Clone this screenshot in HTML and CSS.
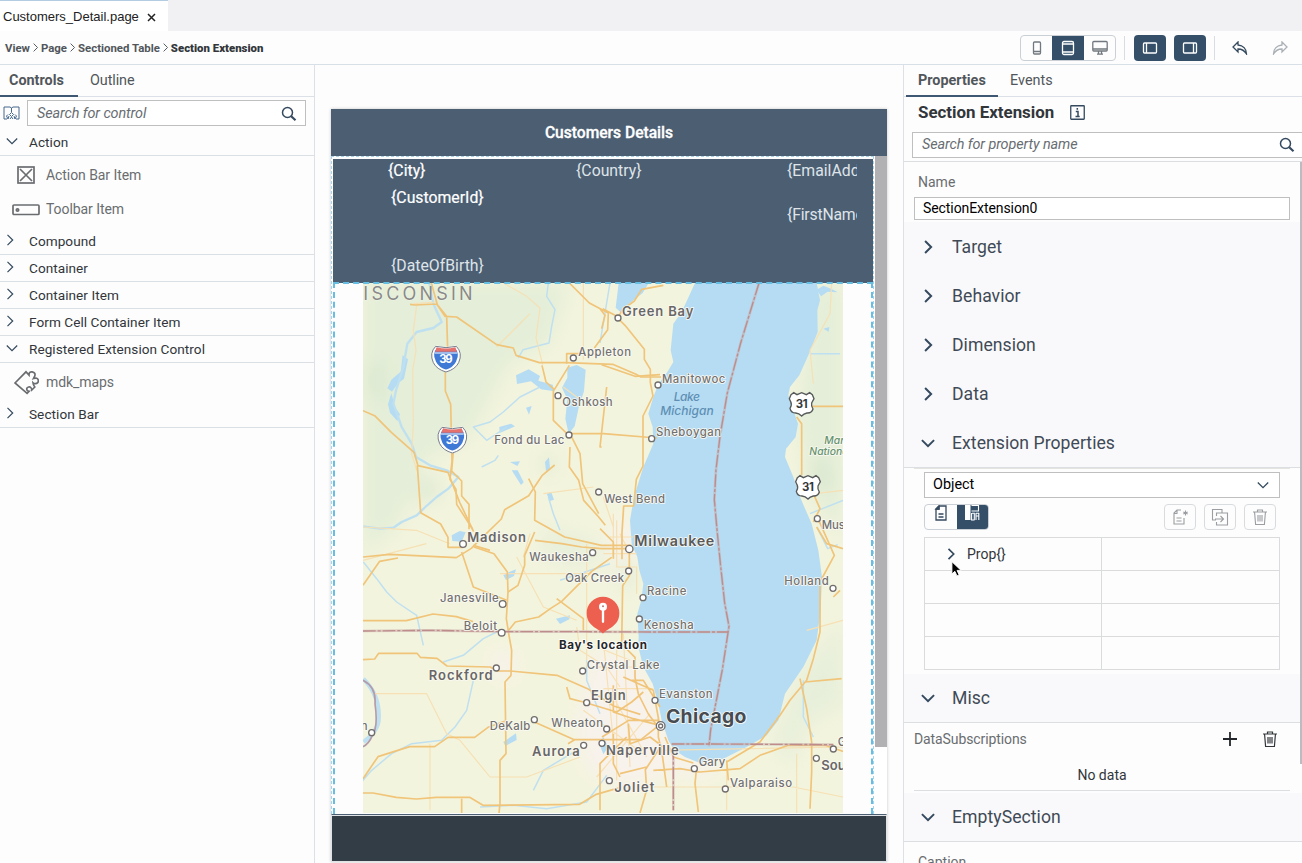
FILE: index.html
```html
<!DOCTYPE html>
<html lang="en">
<head>
<meta charset="utf-8">
<title>Customers_Detail.page</title>
<link rel="stylesheet" href="styles.css">
</head>
<body>
<svg width="0" height="0" class="defs" aria-hidden="true">
  <symbol id="down" viewBox="0 0 12 12"><path d="M.8 3.5 6 8.7l5.200-5.200"/></symbol>
  <symbol id="right" viewBox="0 0 12 12"><path d="M3.500.8 8.700 6l-5.200 5.200"/></symbol>
  <symbol id="search" viewBox="0 0 16 16"><circle cx="6.500" cy="6.500" r="5"/><path d="m10.200 10.200 4.300 4" stroke-width="2.200"/></symbol>
  <symbol id="trash" viewBox="0 0 16 16"><path d="M1 3h14M5.500 2.500V1h5v1.500M2.600 3.500l1 12h8.800l1-12M6 6v6.500M8 6v6.500M10 6v6.500"/></symbol>
</svg>
<header class="tabbar"><div class="filetab"><span>Customers_Detail.page</span><svg width="9" height="9" viewBox="0 0 9 9"><path d="m1 1 7 7M8 1 1 8"/></svg></div></header>
<div class="toolbar">
  <nav class="crumbs"><span>View</span><svg><use href="#right"/></svg><span>Page</span><svg><use href="#right"/></svg><span>Sectioned Table</span><svg><use href="#right"/></svg><b>Section Extension</b></nav>
  <div class="tools">
    <div class="seg">
      <span><svg width="16" height="16" viewBox="0 0 16 16"><rect x="4.500" y="2" width="7" height="12" rx="1"/><path d="M5 11.500h6"/></svg></span>
      <span class="on"><svg width="16" height="16" viewBox="0 0 16 16"><rect x="2.500" y="1.500" width="11" height="13" rx="1.500"/><path d="M2.500 4h11M2.500 12h11"/></svg></span>
      <span><svg width="16" height="16" viewBox="0 0 16 16"><rect x=".8" y="1.500" width="14.400" height="9.500" rx="1"/><path d="M1 9h14M6.500 11v3M9.500 11v3M5 14.200h6"/></svg></span>
    </div>
    <i class="sep"></i>
    <span class="solid"><svg width="16" height="16" viewBox="0 0 16 16"><rect x="1.500" y="3" width="13" height="10" rx="1"/><path d="M4.500 3v10"/></svg></span>
    <span class="solid second"><svg width="16" height="16" viewBox="0 0 16 16"><rect x="1.500" y="3" width="13" height="10" rx="1"/><path d="M11.500 3v10"/></svg></span>
    <i class="sep"></i>
    <svg class="undo" width="16" height="14" viewBox="0 0 16 14"><path d="M6 1 1 6l5 5V8c4 0 6.500 1.500 8.500 5 0-5-3.500-8.500-8.500-9z"/></svg>
    <svg class="redo" width="16" height="14" viewBox="0 0 16 14"><path d="m10 1 5 5-5 5V8c-4 0-6.500 1.500-8.500 5 0-5 3.500-8.500 8.500-9z"/></svg>
  </div>
</div>
<main>
  <aside class="left">
    <div class="tabs"><b>Controls</b><span>Outline</span></div>
    <div class="lsearch"><svg class="book" width="17" height="15" viewBox="0 0 17 15"><path d="M8.500 6V2L7 1H1v12h3M8.500 2 10 1h6v12h-3M8.500 6.500l2 2-2 2-2-2zM5 8.500 3.500 10 5 13l1-3M12 8.500l1.500 1.500L12 13l-1-3M7 13l1.500-2 1.500 2"/></svg><div class="field"><em>Search for control</em><svg class="mag"><use href="#search"/></svg></div></div>
    <div class="group open"><svg><use href="#down"/></svg><span>Action</span></div>
    <div class="item bar"><svg width="18" height="18" viewBox="0 0 18 18"><rect x="1" y="1" width="16" height="16"/><path d="m3 3 12 12M15 3 3 15"/></svg><span>Action Bar Item</span></div>
    <div class="item tool"><svg width="28" height="12" viewBox="0 0 28 12"><rect x="1" y="1" width="26" height="9.500" rx="1"/><circle cx="5.500" cy="6" r="1.200"/></svg><span>Toolbar Item</span></div>
    <div class="group"><svg><use href="#right"/></svg><span>Compound</span></div>
    <div class="group"><svg><use href="#right"/></svg><span>Container</span></div>
    <div class="group"><svg><use href="#right"/></svg><span>Container Item</span></div>
    <div class="group"><svg><use href="#right"/></svg><span>Form Cell Container Item</span></div>
    <div class="group open"><svg><use href="#down"/></svg><span>Registered Extension Control</span></div>
    <div class="item puz"><svg width="25" height="25" viewBox="0 0 25 25"><path d="M1 13 12 2l3 3q-.5-3.500 3-3.500 3.800.5 3 4-.5 2-2 3 4-1 5 2 .3 3.600-3 3.800-1.800 0-2.500-1 0 2.500 2 4.200L13 23.500 10.500 21z" stroke="none"/><path d="M1 13 12 1.800l3 3.200q0-3.500 3.200-3.200 3.600.7 2.600 4.200L19.500 8.500q4-1.300 4.800 1.500.3 3.500-3 3.600-1.500 0-2.300-.8.200 2.400 1.800 4.200l-3 3q-.5-3.500-3.200-3-2.600.8-1.500 3.300.8.900 2 1l-2 2z"/></svg><span>mdk_maps</span></div>
    <div class="group"><svg><use href="#right"/></svg><span>Section Bar</span></div>
  </aside>
  <section class="canvas">
    <div class="device">
      <div class="dhead">Customers Details</div>
      <div class="dbody">
        <div class="content">
          <div class="objhead">
            <div class="c1"><b>{City}</b><b class="cid">{CustomerId}</b><span>{DateOfBirth}</span></div>
            <div class="c2">{Country}</div>
            <div class="c3"><span>{EmailAddress}</span><span class="fn">{FirstName}</span></div>
          </div>
          <div class="mapbox">
<svg class="map" width="480" height="530" viewBox="99 8 1440 1590">
  <defs><filter id="soft" x="-30%" y="-30%" width="160%" height="160%"><feGaussianBlur stdDeviation="28"/></filter></defs>
  <rect x="99" y="8" width="1440" height="1590" fill="#f3f4dd"/>
  <g filter="url(#soft)">
    <path fill="#e4eed8" d="M99 8h620l-60 180-120 60-120 220-150 80-60 180-110 100zM1450 8h90v770l-80-100-60-250z"/>
    <path fill="#e7efda" d="M1420 1160 1540 1020v260l-100 40-60 140-50-80zM640 740l120 30 90 50-120 40-90-40zM250 560l90 40-20 60-80 10zM900 820l30 80-50 40-30-80z"/>
    <path fill="#f8f2ec" d="M800 1100 920 1140 985 1270 1020 1400 1110 1450 900 1520 780 1480 740 1360 760 1220zM840 740l60-40 25 120-80 40zM480 1120l70-10 10 80-60 10zM1060 1430l120 0-40 60-80 0z"/>
    <path fill="#d6e5cd" d="M110 250h40v100h-40zM640 530h28v45h-28zM1440 540l60 20v80l-60-40zM270 620l50-10 0 40-50 0z"/>
  </g>
  <g fill="#b5dcf3">
    <path d="M1095 8 1055 95 1030 130 1022 210 1030 245 1012 275 985 312 970 350 955 400 968 440 970 490 940 560 915 640 905 690 900 720 905 790 922 830 928 870 940 910 934 960 922 1000 926 1070 925 1100 940 1160 968 1210 985 1270 995 1320 1015 1380 1032 1408 1065 1430 1110 1448 1180 1435 1250 1400 1310 1365 1345 1320 1365 1240 1420 1160 1460 1080 1472 990 1476 890 1465 810 1445 730 1410 650 1390 590 1365 530 1368 505 1397 470 1404 430 1390 390 1375 345 1380 320 1408 285 1435 225 1463 155 1462 90 1470 60 1460 8z"/>
    <path d="M866 8h90l-18 30-38 30-28 28-15-14z"/>
    <path d="m712 262 28-8 27 14-5 65-15 45-13 60-18 22-10-45 6-58-16-35 16-30zM558 285l38-18 34 20-5 14 43 12 5 20-40-6-30-24-42 8zM218 225l16 12-12 58-18 14-18 25-14-10 12-26 28-24zM174 372l10-34 12 44 14 20-8 20-22-25zM508 440l35-10 12 8-46 20zM545 570l18 0 18 36-8 8zM365 765l24-13 18 4-12 28-28-2zM645 545l12-14 3 34-12 8zM520 1385l38-26 2 20-34 18zM808 1390l12-20 15 30-15 22zM1460 28l20-12 25 10 18 10-30-2-20 14zM1480 145l18-5-2 14zM540 545l30-2-8 14zM588 382l17-5-8 26zM650 640l14-4 8 22-12 4zM520 890"/>
    <path d="m520 885 18-10 20-8-6 20-24 12zM678 1015l42-10-2 12-28 14z" transform="translate(-14 -270) translate(14 270)"/>
  </g>
  <g fill="none" stroke="#bfe0f0" stroke-width="4.500" stroke-linejoin="round">
    <path d="M298 8 310 70 335 125 310 143 260 155 232 190 220 260 198 330 190 370 215 440 245 490 258 530 300 555 350 570 385 590 355 625 320 650 286 680 260 705 215 725 190 742 150 745 100 738" stroke-width="7"/>
    <path d="m655 8-5 40 25 40-10 50-8 50-38 10-40 10-14 25M630 320 570 350 520 395 480 425 430 440 470 480 530 440M455 560l40-20 10-15M840 8l-30 180M1463 745l30 60 30-12M655 650l15 50 20 50M100 845l40 50 30 40 30 30 60 40 20 90M340 1145l60-20 60-50 40-20M430 1200l-20 90-35 50-40 40-90 10-60 30-60 50-35 40-20 20M740 1410l-100 60-30 60M450 1580l100-5 100 10 120-20 60-80M1440 220l90 0M1420 1200v110l30 60M810 1300 770 1200 770 1140M690 900l150-50M1440 700l99-40"/>
    <path d="M100 1195q50 50 46 120 0 35-45 70" stroke-width="13"/>
  </g>
  <g fill="none" stroke="#f6e0b4" stroke-width="3.500" stroke-linejoin="round">
    <path d="M260 75 250 150 258 210 248 270 250 430 245 520 260 570M520 8l70 40 40 35-12 90 20 80M760 8v230M1505 8 1500 100 1440 210 1450 310M780 380l-80-60M860 720v140h60v80M1455 640l84-10M250 70l70-5M99 740l160 10 100 40M99 840l190-50M560 830l80 150 100 40M770 790v350M820 820h100M600 760l-20 70M300 1590v-200M130 1240h160l60 120 40 20 90 110h110l160-60M980 1410l560-10M960 1520h430l149 30M640 640l150-20M500 200l100-100M510 880l280 0M740 1040l10 70 80 50 40 60M820 1080l30 300M860 1090v410M880 1060l20 400M760 1290l180 130M800 1490l160-190M850 1250l100 180M790 1160h130M820 1225h150M800 1100l100 40M840 770h70M850 700v120M870 760l30 60M820 650l30 90M1430 1050l109-30M1400 1420v178M1190 1450v140"/>
  </g>
  <g fill="none" stroke="#f0c479" stroke-width="5" stroke-linejoin="round">
    <path d="m240 72 15 2 65-3 25 37 35 2 120 83 50 10 8 22 70 22h80l140 5 70 30 15 8h60M304 8l18 65 28 35 3 100M346 272v60l16 40 4 170-6 55 18 30 2 45 48 75M370 512l-5 60 30 30v45l22 25v75"/>
    <path d="m99 391 35 15 50 50 68 60 12 40 90 20 35 90 42 88M262 555l10 142 60 34 22 40v30h46M99 830l80-8 200 10 45-28 20-20 70-68 10-28 72-42 40-60 38-32M432 800l60 20 40 55 2 60-5 80 8 50 8 45-2 75-18 20 3 215-18 20v130l-10 95"/>
    <path d="M670 330v90l45 44M636 255l12 50 25 23 45-73M710 250v-30h45M720 460h100l160 13M720 460l30 60 8 90 48 90M720 500l-2 60 28 40 15 60 45 50 20 25M596 595l20 40-2 85 90 50 110 25h90M615 780l80 10 60 10 60 5h85M614 755l-30 70 0 30-20 60-30 20"/>
    <path d="m718 8 60 60 57 30-2 50-40 55M810 85l15 20-10 40M818 85l37 20 30 30 58 72v30l18 30v40l8 40-30 60v150l-20 40-8 80h-30l-5 80v80M815 253l100 35 75-5M1000 15l-65 12-22 35-35 25-15 26M898 806l0 80-20 30-3 175 40 40v60l10 50 30 60 30 40M815 500l-5 0 20-180M810 745l40 40v50"/>
    <path d="M99 1021h130l80-20 70 8 50 15M99 1138l35-2 12-17h115l10 12 50 3 30 23 130 3 20 12h40l140 13 95 42 75 50 80 25M536 1050l20-25 70-15 35-25 34-22 90-90 60-42M680 955l80 60 0 35M99 915l50-72 55-10M395 815l35 105 100 40M99 1495l45-66 95-30h75l40-28h80l40-30 50-18M613 1325l120 53h200l50-40M734 1378l-20 12M99 1538h30l70 13 60 5 60-5 100 0 40 24 290-3 50-30 70-20M395 1555v50"/>
    <path d="m710 1220 10 35 40 10 100 30 45-30 35-30M850 1215v80l60 20 80 20M880 1190l90 40 20 110M905 1200l35 0 50 80M816 1370l80-50h90M895 1330l5 60 60-20 40 30M850 1360v90l20 40M870 1480l80-20M810 1590v-140l80-80M930 1598l20-70-4-60 40-60M985 1310v60l10 40 15 110M1005 1370l25 60 60 18M970 1470l80-5 60 10 120-10 60-40 85-30h110l60 20h50M1190 1445l100-60 60-80 30-45 50-60 20-65 20-80 0-150 43-80-49-110M1100 1460l-5 50 10 85M1450 640l20 45-20 40M1460 740l30 50 49 15M1400 410l15 20 0 155M1445 378h95M1425 1205l110-10M1410 1195l20 90 15 100v90l-5 110M1530 930l-20 20M480 810l-50-15M1190 1440l5 60"/>
  </g>
  <g fill="none" stroke-linejoin="round">
    <path d="m1287 8-55 180-40 150-22 130-12 100-5 90 8 90 11 110 12 110 13 70-20 130-35 180-5 50M99 1052l200-2 235 4 225 0 200 1h236M1025 1391l120 0 365 2M1030 1400v190" stroke="#c8a9a8" stroke-width="8" opacity=".55"/>
    <path d="m1287 8-55 180-40 150-22 130-12 100-5 90 8 90 11 110 12 110 13 70-20 130-35 180-5 50M99 1052l200-2 235 4 225 0 200 1h236M1025 1391l120 0 365 2M1030 1400v190" stroke="#bd8c8b" stroke-width="4" stroke-dasharray="38 6 9 6"/>
    <path d="M99 1200q40 20 36 70 10 70-8 95-10 25-28 34" stroke="#b39ba8" stroke-width="5"/>
  </g>
  <g fill="#fff" stroke="#716d6c" stroke-width="4">
    <circle cx="864" cy="113" r="9"/><circle cx="730" cy="233" r="9"/><circle cx="684" cy="346" r="9"/><circle cx="984" cy="314" r="9"/><circle cx="717" cy="464" r="9"/><circle cx="965" cy="475" r="9"/><circle cx="806" cy="635" r="9"/><circle cx="898" cy="806" r="11"/><circle cx="399" cy="791" r="10"/><circle cx="788" cy="817" r="9"/><circle cx="896" cy="872" r="9"/><circle cx="939" cy="952" r="9"/><circle cx="928" cy="1016" r="9"/><circle cx="518" cy="971" r="10"/><circle cx="515" cy="1057" r="10"/><circle cx="499" cy="1163" r="9"/><circle cx="758" cy="1172" r="9"/><circle cx="770" cy="1267" r="9"/><circle cx="975" cy="1260" r="9"/><circle cx="613" cy="1318" r="9"/><circle cx="830" cy="1346" r="9"/><circle cx="761" cy="1395" r="9"/><circle cx="816" cy="1389" r="9"/><circle cx="838" cy="1501" r="9"/><circle cx="1093" cy="1465" r="9"/><circle cx="1186" cy="1526" r="9"/><circle cx="1459" cy="1434" r="9"/><circle cx="1510" cy="1406" r="9"/><circle cx="1509" cy="924" r="9"/><circle cx="1462" cy="715" r="9"/><circle cx="125" cy="1357" r="9"/><circle cx="992" cy="1337" r="13"/><circle cx="992" cy="1337" r="6"/>
  </g>
  <g class="lab">
    <text class="state" x="100" y="58" textLength="328">ISCONSIN</text>
    <text class="mid" x="876" y="107" textLength="214">Green Bay</text>
    <text x="745" y="227" textLength="158">Appleton</text>
    <text x="996" y="307" textLength="190">Manitowoc</text>
    <text x="697" y="378" textLength="151">Oshkosh</text>
    <text x="978" y="468" textLength="195">Sheboygan</text>
    <text x="493" y="490" textLength="210">Fond du Lac</text>
    <text x="822" y="667" textLength="183">West Bend</text>
    <text class="big" x="913" y="796" textLength="240">Milwaukee</text>
    <text class="mid" x="412" y="785" textLength="176">Madison</text>
    <text x="598" y="843" textLength="178">Waukesha</text>
    <text x="706" y="904" textLength="176">Oak Creek</text>
    <text x="951" y="945" textLength="118">Racine</text>
    <text x="941" y="1046" textLength="150">Kenosha</text>
    <text x="1363" y="915" textLength="133">Holland</text>
    <text x="330" y="966" textLength="176">Janesville</text>
    <text x="401" y="1050" textLength="100">Beloit</text>
    <text class="mid" x="296" y="1200" textLength="192">Rockford</text>
    <text x="770" y="1166" textLength="218">Crystal Lake</text>
    <text class="mid" x="783" y="1259" textLength="104">Elgin</text>
    <text x="987" y="1253" textLength="161">Evanston</text>
    <text x="479" y="1350" textLength="122">DeKalb</text>
    <text x="664" y="1340" textLength="155">Wheaton</text>
    <text class="mid" x="606" y="1426" textLength="143">Aurora</text>
    <text class="mid" x="828" y="1425" textLength="218">Naperville</text>
    <text class="city" x="1008" y="1328" textLength="241">Chicago</text>
    <text class="mid" x="853" y="1535" textLength="120">Joliet</text>
    <text x="1106" y="1458" textLength="80">Gary</text>
    <text x="1200" y="1520" textLength="186">Valparaiso</text>
    <text class="mid" x="1474" y="1468">Sou</text>
    <text x="1523" y="1397">G</text>
    <text x="1475" y="746">Mus</text>
    <text x="92" y="1350">n</text>
    <text class="forest" x="1483" y="492">Man</text><text class="forest" x="1438" y="523">Nationa</text>
    <text class="lake" x="1031" y="363" textLength="79">Lake</text><text class="lake" x="991" y="403" textLength="160">Michigan</text>
  </g>
  <g id="interstate"><path d="M320 199q28 8 56 0 20 20 6 46-10 20-34 27-24-7-34-27-14-26 6-46z" fill="#3f79d6" stroke="#fff" stroke-width="8"/><path d="M317 198q31 8 62 0 20 20 7 49-10 20-38 28-28-8-38-28-13-29 7-49z" fill="none" stroke="#777d8a" stroke-width="3"/><path d="M320 201q28 7 56 0l5 13h-66z" fill="#e4716c"/><path d="M314 218h68" stroke="#fff" stroke-width="3"/><text class="i39" x="328" y="249" textLength="40">39</text></g>
  <use href="#interstate" x="19" y="243"/>
  <g id="us31"><path d="m1383 343 8-6 10 6 14-6 14 6 10-6 8 6 5 12-7 13q-2 8 4 18-4 13-18 12-10 2-16 9-8-8-18-9-14 0-17-14 7-10 2-20l-4-9z" fill="#fff" stroke="#575a5a" stroke-width="4"/><text class="us" x="1397" y="383" textLength="36">31</text></g>
  <use href="#us31" x="19" y="249"/>
  <path d="M819 1060c-10-15-49-20-49-62a49 49 0 0 1 98 0c0 42-39 47-49 62z" fill="#ed5f4f"/>
  <circle cx="819" cy="979" r="12" fill="#fff"/><circle cx="819" cy="978" r="3" fill="#bd7770"/><path d="M819 988v36" stroke="#fff" stroke-width="7" stroke-linecap="round"/>
  <text class="bay" x="687" y="1107" textLength="264">Bay's location</text>
</svg>
          </div>
        </div>
        <div class="dscroll"><i></i></div>
      </div>
      <div class="dfoot"></div>
    </div>
  </section>
  <aside class="right">
    <div class="tabs"><b>Properties</b><span>Events</span></div>
    <div class="title"><b>Section Extension</b><svg width="15" height="15" viewBox="0 0 15 15"><rect x=".75" y=".75" width="13.500" height="13.500" rx=".5"/><path d="M5.800 6.400H8V11M5.500 11.400h4.200M7.300 3v1.800" stroke-width="1.500"/></svg></div>
    <div class="field rsearch"><em>Search for property name</em><svg class="mag"><use href="#search"/></svg></div>
    <div class="props">
      <div class="label">Name</div>
      <div class="input">SectionExtension0</div>
      <div class="sec"><svg><use href="#right"/></svg>Target</div>
      <div class="sec"><svg><use href="#right"/></svg>Behavior</div>
      <div class="sec"><svg><use href="#right"/></svg>Dimension</div>
      <div class="sec"><svg><use href="#right"/></svg>Data</div>
      <div class="sec line extp"><svg><use href="#down"/></svg>Extension Properties</div>
      <div class="ext">
        <div class="select">Object<svg><use href="#down"/></svg></div>
        <div class="etools">
          <div class="seg2"><span><svg width="16" height="20" viewBox="0 0 16 20"><path d="M6 3h7v14H3V6zM3 6h3V3M5.500 11h5M5.500 14h5"/><path d="m3 6 3-3v3z" class="f"/></svg></span><span class="on"><svg width="16" height="16" viewBox="0 0 16 16"><path d="M1 0h5.500v15H1z" class="f"/><path d="M7.500.5h7v5.500h-7M8 8.200h2.300V15M12 8.200h3M12 8v7M12 11h3M14.800 8v7M7.600 8v7h3"/></svg></span></div>
          <div class="ebtns">
            <span><svg width="18" height="18" viewBox="0 0 18 18"><path d="M10 2H6L3 5v11h10v-6M3 5.500h3V2M5.500 10h5M5.500 13h5M14.500 2.500v5M12.300 4l4.400 2M16.700 4l-4.400 2"/></svg></span>
            <span><svg width="18" height="18" viewBox="0 0 18 18"><path d="M5 12H1.500V1.500H11V5M5.500 8V5h11v12h-11v-3M4 11h8M9.500 8l3 3-3 3"/></svg></span>
            <span><svg width="16" height="16"><use href="#trash"/></svg></span>
          </div>
        </div>
        <div class="grid"><div class="prop"><svg><use href="#right"/></svg>Prop{}<svg class="cursor" viewBox="0 0 12 18"><path d="M1 1v13.500l3.200-3 2.300 5 2.400-1-2.300-5H11z"/></svg></div><div></div><div></div><div></div><div></div><div></div><div></div><div></div></div>
      </div>
      <div class="sec line"><svg><use href="#down"/></svg>Misc</div>
      <div class="datasub"><span>DataSubscriptions</span><svg class="plus" width="16" height="16" viewBox="0 0 16 16"><path d="M8 1v14M1 8h14"/></svg><svg class="tr" width="16" height="16"><use href="#trash"/></svg></div>
      <div class="nodata">No data</div>
      <div class="sec line empty"><svg><use href="#down"/></svg>EmptySection</div>
      <div class="label cap">Caption</div>
      <i class="pscroll"></i>
    </div>
  </aside>
</main>
</body>
</html>
```

FILE: styles.css
```css
* { box-sizing: border-box; }
body { margin: 0; width: 1302px; height: 863px; overflow: hidden; background: #fdfdfd; font: 14px/18px Roboto, "Liberation Sans", sans-serif; color: #32363a; }
svg { fill: none; stroke: #354a5f; stroke-width: 1.3; flex: none; }
.defs { position: absolute; }
.tabbar { height: 31px; background: #f1f1f4; display: flex; }
.filetab { width: 168px; background: #fff; border-top: 1px solid #b3cce2; padding: 2px 0 0 3px; display: flex; align-items: center; gap: 8px; font-family: "Liberation Sans", sans-serif; font-size: 13px; color: #222; white-space: nowrap; }
.filetab svg { stroke: #222; stroke-width: 1.500; }
.toolbar { height: 34px; border-bottom: 1px solid #d9dfe6; display: flex; justify-content: space-between; }
.crumbs { display: flex; align-items: center; padding-left: 5px; font-size: 11.400px; font-weight: 700; color: #51565b; }
.crumbs svg { width: 9px; height: 9px; margin: 0 1px; stroke: #51565b; }
.crumbs b { color: #32363a; }
.tools { display: flex; align-items: center; width: 282px; }
.seg { width: 96px; height: 26px; border: 1px solid #cbd0d6; border-radius: 4px; display: flex; overflow: hidden; }
.seg span { flex: 0 0 32px; display: grid; place-items: center; }
.seg span:first-child { flex-basis: 31px; padding-left: 1px; }
.seg .on, .solid, .seg2 .on { background: #354f69; }
.seg svg { stroke: #71787f; }
.seg .on svg, .solid svg { stroke: #fff; }
.sep { width: 1px; height: 24px; background: #d9dce0; margin: 0 9px 0 8px; }
.solid { width: 32px; height: 26px; border-radius: 4px; display: grid; place-items: center; }
.solid.second { margin-left: 8px; }
.undo { margin-left: 8px; }
.redo { margin-left: 24px; stroke: #aab0b6; }
main { display: flex; height: 798px; }
.left { width: 315px; border-right: 1px solid #dde1e6; }
.tabs { height: 32px; border-bottom: 1px solid #dbe1e7; display: flex; font-size: 14.400px; line-height: 32px; color: #51565b; }
.tabs b { border-bottom: 2px solid #3e5873; height: 32px; padding: 0 12px 0 9px; width: 78px; }
.tabs span { padding-left: 12px; }
.left .tabs span { letter-spacing: -.1px; }
.lsearch { display: flex; align-items: center; height: 32px; padding-left: 3px; gap: 7px; }
.lsearch svg.book { stroke: #44688b; stroke-width: 1; }
.field { height: 26px; border: 1px solid #bfbfbf; background: #fff; display: flex; align-items: center; justify-content: space-between; padding: 0 8px 0 9px; color: #686d72; font-size: 14.400px; letter-spacing: -.1px; }
.field .mag { width: 16px; height: 16px; stroke-width: 1.500; }
.lsearch .field { width: 279px; padding-top: 1px; }
.group { height: 27px; border-bottom: 1px solid #dbe0e5; display: flex; align-items: center; gap: 13px; padding-left: 4px; font-size: 13.600px; letter-spacing: .05px; }
.group svg { width: 12px; height: 12px; margin-bottom: 2px; stroke-width: 1.200; }
.group.open { padding-left: 6px; gap: 11px; }
.item { display: flex; align-items: center; color: #6a6d70; font-size: 14px; letter-spacing: -.07px; }
.item svg { stroke: #6a6d70; stroke-width: 1.700; }
.bar { height: 38px; padding-left: 17px; gap: 11px; }
.tool { height: 34px; padding: 0 0 4px 12px; gap: 6px; }
.tool svg { margin-top: 2px; }
.puz { height: 38px; padding-left: 14px; gap: 7px; }
.canvas { width: 588px; padding: 44px 0 0 16px; }
.device { width: 556px; box-shadow: 0 0 3px rgba(0,0,0,.22); }
.dhead { height: 47px; background: #4b5e72; color: #fff; text-align: center; font-size: 15.600px; font-weight: 500; line-height: 49px; -webkit-text-stroke: .3px #fff; }
.dbody { height: 658px; display: flex; }
.content { width: 543px; border: 1px dashed #a9d4e8; border-bottom: 0; background: #fdfdfd; }
.objhead { height: 124px; margin: 2px 0 0 1px; background: #4b5e72; color: #dfe4e9; display: grid; grid-template-columns: 243px 211px 70px; font-size: 15.800px; line-height: 20px; width: 540px; }
.objhead > div { display: flex; flex-direction: column; overflow: hidden; padding-top: 2px; }
.objhead b { font-weight: 400; color: #fff; -webkit-text-stroke: .2px #fff; }
.objhead .c1 { padding-left: 55px; }
.objhead .cid { margin: 7px 0 48px 3px; }
.c1 span { padding-left: 3px; }
.objhead .c3 { gap: 24px; }
.fn { letter-spacing: -.2px; }
.mapbox { height: 532px; margin: -1px 0 0 1px; padding: 1px 0 0 30px; width: 540px; position: relative; }
.mapbox::after { content: ""; position: absolute; inset: 0; border: 2px dashed #67bee3; border-bottom: 0; }
.map { display: block; stroke: none; overflow: hidden; }
.dscroll { width: 13px; background: #fff; }
.dscroll i { display: block; height: 591px; background: #b1b1b3; margin-left: 1px; }
.dfoot { height: 48px; background: #333d46; border: 1px solid #e0e3e6; border-top: 1px solid #4b5e72; box-shadow: inset 0 1px #dfe3e6; position: relative; }
.lab text { font-family: Inter, sans-serif; font-size: 34px; font-weight: 500; fill: #737170; stroke: #fafaf4; stroke-width: 5px; paint-order: stroke; stroke-linejoin: round; }
.lab .mid { font-size: 39px; font-weight: 600; fill: #696766; }
.lab .big { font-size: 43px; font-weight: 600; fill: #5b5a5b; }
.lab .city { font-size: 58px; font-weight: 700; fill: #474c53; }
.lab .state { font-size: 54px; font-weight: 400; fill: #898a88; stroke-width: 2px; }
.lab .forest { font-size: 31px; font-style: italic; fill: #67936d; }
.lab .lake { font-size: 36px; font-style: italic; fill: #5e8fb3; stroke: none; }
.i39 { font: 700 34px Inter, sans-serif; fill: #fff; }
.us { font: 700 34px Inter, sans-serif; fill: #34383a; }
.bay { font: 700 35px Inter, sans-serif; fill: #26272a; stroke: #fff; stroke-width: 5px; paint-order: stroke; }
.right { width: 399px; border-left: 1px solid #dde1e6; }
.right .tabs b { width: 92px; margin-left: 2px; padding-left: 12px; }
.title { height: 35px; padding: 0 0 5px 14px; display: flex; align-items: center; font-size: 16.900px; color: #32363a; gap: 16px; }
.rsearch { margin-left: 8px; border-right: 0; padding-right: 7px; }
.props { margin-top: 3px; border-top: 1px solid #dcdfe2; height: 702px; position: relative; overflow: hidden; }
.label { padding: 11px 0 0 14px; height: 35px; color: #6a6d70; }
.input { margin-left: 10px; width: 376px; height: 23px; border: 1px solid #bfbfbf; padding-left: 8px; line-height: 21px; color: #000; background: #fff; margin-bottom: 2px; letter-spacing: -.08px; }
.sec { height: 49px; background: #f9f9fb; display: flex; align-items: center; font-size: 17.600px; padding-left: 17px; gap: 17px; color: #3f4a56; letter-spacing: .05px; }
.sec svg { width: 14px; height: 14px; stroke-width: 1.700; }
.line { border-bottom: 1px solid #dcdfe2; }
.extp { height: 50px; }
.ext { padding: 3px 0 0 10px; width: 376px; margin-left: 10px; border-top: 1px solid #e3e3e0; height: 206px; }
.select { width: 356px; height: 26px; border: 1px solid #bfbfbf; background: #fff; display: flex; justify-content: space-between; align-items: center; padding: 0 10px 0 8px; color: #000; font-size: 14.400px; }
.select svg { width: 12px; height: 12px; }
.etools { width: 352px; display: flex; justify-content: space-between; margin: 6px 0 7px; }
.seg2 { width: 65px; height: 26px; border: 1px solid #cbd0d6; border-radius: 4px; display: flex; overflow: hidden; }
.seg2 span { flex: 1; display: flex; justify-content: center; align-items: flex-start; }
.seg2 span:first-child svg { margin-top: -2px; }
.seg2 .f { fill: #354a5f; }
.seg2 .on svg { stroke: #fff; stroke-width: 1.100; }
.seg2 .on .f { fill: #fff; stroke: none; }
.ebtns { display: flex; gap: 8px; }
.ebtns span { width: 32px; height: 26px; border: 1px solid #d9dcdf; border-radius: 4px; display: grid; place-items: center; }
.ebtns svg { stroke: #9a9da1; stroke-width: 1.100; }
.grid { display: grid; grid-template-columns: 177px 178px; grid-auto-rows: 33px; border: 1px solid #d9dbdd; border-width: 1px 0 0 1px; width: 356px; }
.grid div { border: 1px solid #d9dbdd; border-width: 0 1px 1px 0; }
.grid .prop { display: flex; align-items: center; padding-left: 20px; gap: 10px; position: relative; }
.prop svg { width: 12px; height: 12px; stroke-width: 1.700; }
.prop .cursor { position: absolute; left: 26px; top: 22px; width: 11px; height: 18px; fill: #000; stroke: #fff; stroke-width: 1; z-index: 2; }
.datasub { height: 32px; padding: 0 24px 0 10px; display: flex; align-items: center; color: #6a6d70; letter-spacing: -.1px; }
.plus { margin-left: auto; stroke: #22262a; stroke-width: 1.800; }
.tr { margin-left: 24px; stroke: #32363a; stroke-width: 1.200; }
.nodata { height: 36px; margin-left: 10px; width: 376px; border-bottom: 1px solid #dcdfe2; text-align: center; line-height: 41px; }
.empty { margin-top: 2px; }
.pscroll { position: absolute; right: 0; top: 0; width: 2px; height: 602px; background: #bcbcc0; }
```
